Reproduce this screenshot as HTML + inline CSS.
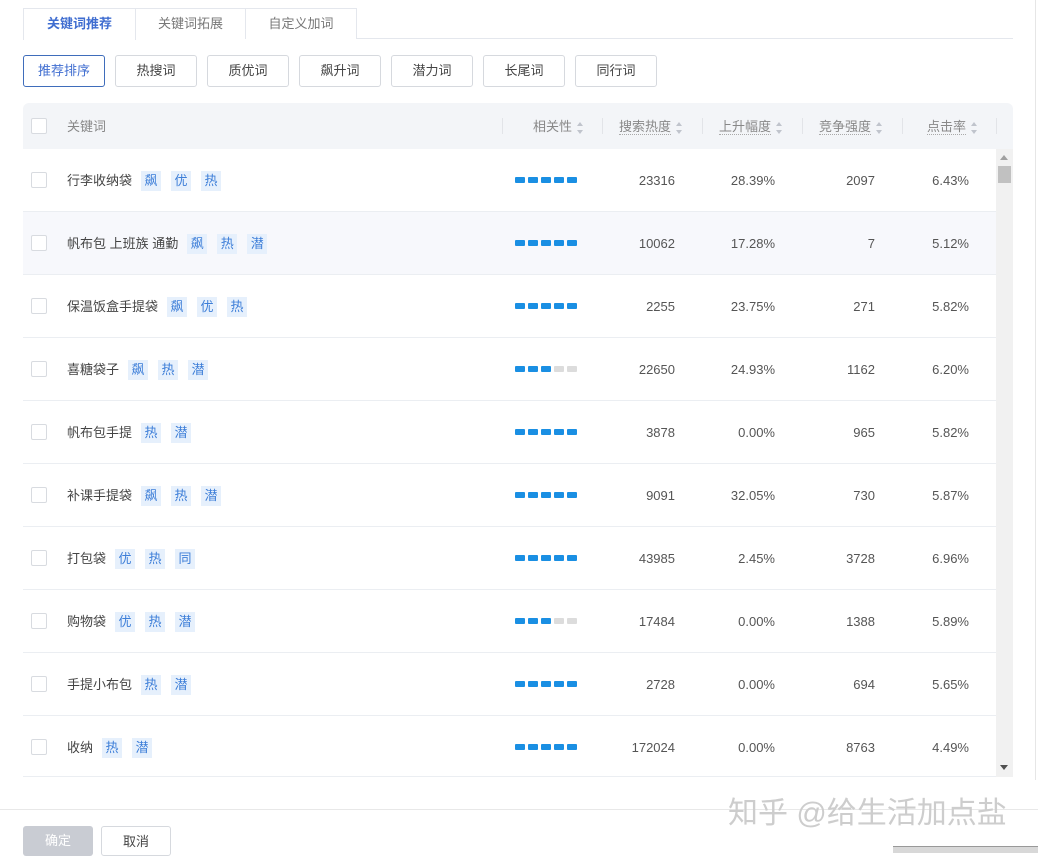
<!DOCTYPE html>
<html><head><meta charset="utf-8"><style>
*{box-sizing:border-box;margin:0;padding:0}
body{width:1038px;height:853px;overflow:hidden;background:#fff;position:relative;font-family:"Liberation Sans","Noto Sans CJK SC",sans-serif;font-size:13px;color:#444}
.a{position:absolute}
.tab{position:absolute;top:8px;height:31px;border:1px solid #e4e7ed;border-bottom:none;line-height:29px;text-align:center;color:#777;font-size:13px;background:#fff}
.btn{position:absolute;top:55px;width:82px;height:32px;border:1px solid #d6d9de;border-radius:3px;text-align:center;line-height:30px;color:#444;font-size:13px}
.hd{position:absolute;top:116px;font-size:13px;color:#888;white-space:nowrap}
.hd u{text-decoration:none;border-bottom:1px dotted #aaa}
.sort{display:inline-block;vertical-align:middle;margin-left:5px;width:7px;height:12px;position:relative}
.sort:before{content:"";position:absolute;left:0;top:0;border:3.5px solid transparent;border-bottom:4px solid #c0c4cc;border-top:none}
.sort:after{content:"";position:absolute;left:0;bottom:0;border:3.5px solid transparent;border-top:4px solid #c0c4cc;border-bottom:none}
.sep{position:absolute;top:118px;width:1px;height:16px;background:#e2e4e8}
.row{position:absolute;left:23px;width:973px;height:63px;border-bottom:1px solid #ebeef2}
.cb{position:absolute;left:8px;top:23px;width:16px;height:16px;border:1px solid #d8dbe0;border-radius:2px;background:#fff}
.kw{position:absolute;left:44px;top:22px;line-height:20px;white-space:nowrap;color:#444}
.tg{display:inline-block;width:20px;height:20px;line-height:20px;text-align:center;background:#e6f0fc;color:#3d7ed8;margin-left:9px;font-size:13px}
.tg+.tg{margin-left:10px}
.bars{position:absolute;left:492px;top:28px;height:6px}
.bars i{float:left;width:10px;height:6px;margin-right:3px;background:#1a8fe3;border-radius:1px}
.bars i.g{background:#dcdcdc}
.n{position:absolute;top:22px;line-height:20px;text-align:right;color:#555}
</style></head><body>
<div class="a" style="left:23px;top:38px;width:990px;height:1px;background:#e4e7ed"></div>
<div class="tab" style="left:23px;width:113px;color:#3f6dd0;font-weight:bold;height:32px">关键词推荐</div>
<div class="tab" style="left:135px;width:111px">关键词拓展</div>
<div class="tab" style="left:245px;width:112px">自定义加词</div>

<div class="btn" style="left:23px;border-color:#3f6dbb;color:#3f6dd0">推荐排序</div>
<div class="btn" style="left:115px">热搜词</div>
<div class="btn" style="left:207px">质优词</div>
<div class="btn" style="left:299px">飙升词</div>
<div class="btn" style="left:391px">潜力词</div>
<div class="btn" style="left:483px">长尾词</div>
<div class="btn" style="left:575px">同行词</div>

<div class="a" style="left:23px;top:103px;width:990px;height:46px;background:#f3f5f8;border-radius:6px 6px 0 0"></div>
<div class="a" style="left:31px;top:118px;width:16px;height:16px;border:1px solid #d8dbe0;border-radius:2px;background:#fff"></div>
<div class="hd" style="left:67px">关键词</div>
<div class="sep" style="left:502px"></div>
<div class="hd" style="left:533px">相关性<span class="sort"></span></div>
<div class="sep" style="left:602px"></div>
<div class="hd" style="left:619px"><u>搜索热度</u><span class="sort"></span></div>
<div class="sep" style="left:702px"></div>
<div class="hd" style="left:719px"><u>上升幅度</u><span class="sort"></span></div>
<div class="sep" style="left:802px"></div>
<div class="hd" style="left:819px"><u>竞争强度</u><span class="sort"></span></div>
<div class="sep" style="left:902px"></div>
<div class="hd" style="left:927px"><u>点击率</u><span class="sort"></span></div>
<div class="sep" style="left:996px"></div>

<div class="a" style="left:996px;top:149px;width:17px;height:628px;background:#f1f1f1"></div>
<div class="a" style="left:1000px;top:155px;border:4px solid transparent;border-bottom:5px solid #a0a0a0;border-top:none"></div>
<div class="a" style="left:998px;top:166px;width:13px;height:17px;background:#c1c1c1"></div>
<div class="a" style="left:1000px;top:765px;border:4px solid transparent;border-top:5px solid #505050;border-bottom:none"></div>

<div class="row" style="top:149px"><div class="cb"></div><div class="kw">行李收纳袋<span class="tg">飙</span><span class="tg">优</span><span class="tg">热</span></div><div class="bars"><i></i><i></i><i></i><i></i><i></i></div><div class="n" style="right:321px">23316</div><div class="n" style="right:221px">28.39%</div><div class="n" style="right:121px">2097</div><div class="n" style="right:27px">6.43%</div></div>
<div class="row" style="top:212px;background:#f7f8fc"><div class="cb"></div><div class="kw">帆布包 上班族 通勤<span class="tg">飙</span><span class="tg">热</span><span class="tg">潜</span></div><div class="bars"><i></i><i></i><i></i><i></i><i></i></div><div class="n" style="right:321px">10062</div><div class="n" style="right:221px">17.28%</div><div class="n" style="right:121px">7</div><div class="n" style="right:27px">5.12%</div></div>
<div class="row" style="top:275px"><div class="cb"></div><div class="kw">保温饭盒手提袋<span class="tg">飙</span><span class="tg">优</span><span class="tg">热</span></div><div class="bars"><i></i><i></i><i></i><i></i><i></i></div><div class="n" style="right:321px">2255</div><div class="n" style="right:221px">23.75%</div><div class="n" style="right:121px">271</div><div class="n" style="right:27px">5.82%</div></div>
<div class="row" style="top:338px"><div class="cb"></div><div class="kw">喜糖袋子<span class="tg">飙</span><span class="tg">热</span><span class="tg">潜</span></div><div class="bars"><i></i><i></i><i></i><i class="g"></i><i class="g"></i></div><div class="n" style="right:321px">22650</div><div class="n" style="right:221px">24.93%</div><div class="n" style="right:121px">1162</div><div class="n" style="right:27px">6.20%</div></div>
<div class="row" style="top:401px"><div class="cb"></div><div class="kw">帆布包手提<span class="tg">热</span><span class="tg">潜</span></div><div class="bars"><i></i><i></i><i></i><i></i><i></i></div><div class="n" style="right:321px">3878</div><div class="n" style="right:221px">0.00%</div><div class="n" style="right:121px">965</div><div class="n" style="right:27px">5.82%</div></div>
<div class="row" style="top:464px"><div class="cb"></div><div class="kw">补课手提袋<span class="tg">飙</span><span class="tg">热</span><span class="tg">潜</span></div><div class="bars"><i></i><i></i><i></i><i></i><i></i></div><div class="n" style="right:321px">9091</div><div class="n" style="right:221px">32.05%</div><div class="n" style="right:121px">730</div><div class="n" style="right:27px">5.87%</div></div>
<div class="row" style="top:527px"><div class="cb"></div><div class="kw">打包袋<span class="tg">优</span><span class="tg">热</span><span class="tg">同</span></div><div class="bars"><i></i><i></i><i></i><i></i><i></i></div><div class="n" style="right:321px">43985</div><div class="n" style="right:221px">2.45%</div><div class="n" style="right:121px">3728</div><div class="n" style="right:27px">6.96%</div></div>
<div class="row" style="top:590px"><div class="cb"></div><div class="kw">购物袋<span class="tg">优</span><span class="tg">热</span><span class="tg">潜</span></div><div class="bars"><i></i><i></i><i></i><i class="g"></i><i class="g"></i></div><div class="n" style="right:321px">17484</div><div class="n" style="right:221px">0.00%</div><div class="n" style="right:121px">1388</div><div class="n" style="right:27px">5.89%</div></div>
<div class="row" style="top:653px"><div class="cb"></div><div class="kw">手提小布包<span class="tg">热</span><span class="tg">潜</span></div><div class="bars"><i></i><i></i><i></i><i></i><i></i></div><div class="n" style="right:321px">2728</div><div class="n" style="right:221px">0.00%</div><div class="n" style="right:121px">694</div><div class="n" style="right:27px">5.65%</div></div>
<div class="row" style="top:716px;height:61px"><div class="cb"></div><div class="kw">收纳<span class="tg">热</span><span class="tg">潜</span></div><div class="bars"><i></i><i></i><i></i><i></i><i></i></div><div class="n" style="right:321px">172024</div><div class="n" style="right:221px">0.00%</div><div class="n" style="right:121px">8763</div><div class="n" style="right:27px">4.49%</div></div>

<div class="a" style="left:1035px;top:0;width:1px;height:780px;background:#e6e6e6"></div>
<div class="a" style="left:0;top:809px;width:1038px;height:1px;background:#e8e8e8"></div>
<div class="a" style="left:728px;top:788px;font-size:30px;color:#cdcdcd;white-space:nowrap;letter-spacing:0px">知乎 @给生活加点盐</div>
<div class="a" style="left:23px;top:826px;width:70px;height:30px;background:#c9ccd3;border-radius:3px;color:#fff;text-align:center;line-height:30px">确定</div>
<div class="a" style="left:101px;top:826px;width:70px;height:30px;border:1px solid #d6d9de;border-radius:3px;text-align:center;line-height:30px;color:#444">取消</div>
<div class="a" style="left:893px;top:846px;width:145px;height:7px;background:#d8d8d8;border-top:1px solid #999"></div>
</body></html>
